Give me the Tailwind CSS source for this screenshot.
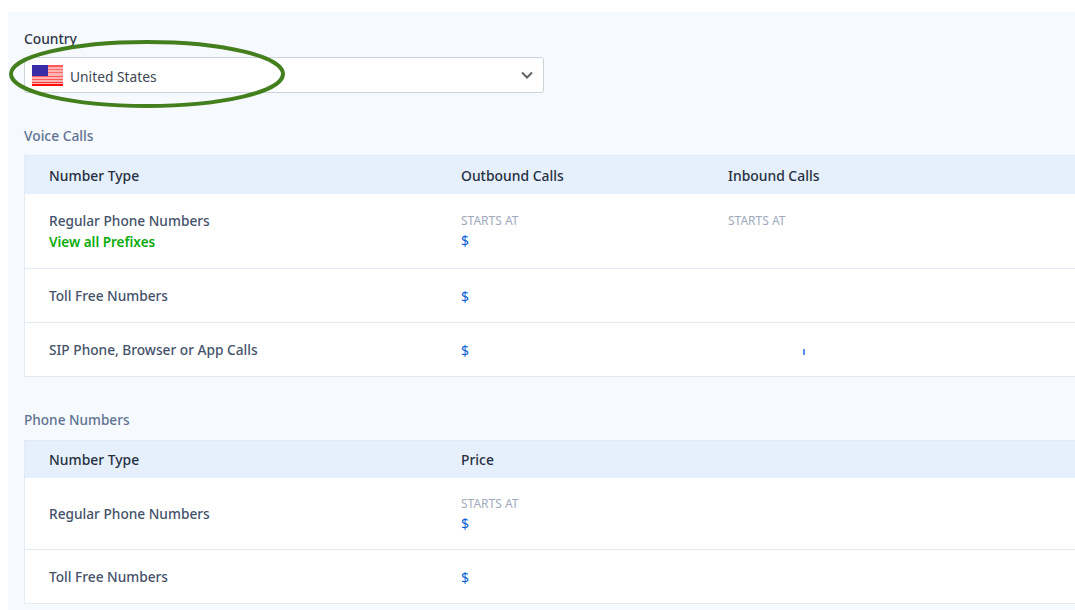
<!DOCTYPE html>
<html lang="en">
<head>
    <meta charset="UTF-8">
    <meta name="viewport" content="width=device-width, initial-scale=1.0">
    <title>Pricing</title>
    <script src="https://cdn.jsdelivr.net/npm/@tailwindcss/browser@4"></script>
</head>
<body class="bg-white font-['Noto_Sans',sans-serif] h-[610px] overflow-hidden">
    <div class="relative ml-2 mt-3 bg-[#f6f9fe] pl-4 h-[598px] overflow-hidden">
        <label class="block pt-[18px] text-[13.8px] leading-[18px] font-medium text-[#2d3748]">Country</label>
        <div class="mt-[9px] w-[520px] h-[36px] flex items-center justify-between bg-white border border-[#cbd2dc] rounded-[3px] pl-[7px] pr-[9px]">
            <div class="flex items-center">
                <svg width="31" height="21" viewBox="0 0 31 21">
                    <rect width="31" height="21" fill="#ffb3b3"/>
                    <rect y="0" width="31" height="2" fill="#ff5a5a"/>
                    <rect y="4" width="31" height="1" fill="#ff6a6a"/>
                    <rect y="7" width="31" height="1" fill="#ff6a6a"/>
                    <rect y="11" width="31" height="1" fill="#ff5a5a"/>
                    <rect y="14" width="31" height="1" fill="#ff5a5a"/>
                    <rect y="17" width="31" height="1" fill="#ff3a3a"/>
                    <rect y="19" width="31" height="2" fill="#ff1010"/>
                    <rect width="16" height="11" fill="#3a2ba8"/>
                </svg>
                <span class="ml-[7px] pt-[5px] text-[13.8px] text-[#3d4653]">United States</span>
            </div>
            <svg width="14" height="14" viewBox="0 0 14 14" fill="none" stroke="#5f6368" stroke-width="2">
                <path d="M2 4.5 7 9.5 12 4.5"/>
            </svg>
        </div>

        <h2 class="mt-[34px] text-[13.8px] leading-[18px] font-medium text-[#5e7391]">Voice Calls</h2>
        <div class="mt-[10px] w-[1200px] border border-[#e3eaf3] bg-white">
            <div class="flex h-[38px] items-center pt-[3px] bg-[#e6f0fc] text-[13.9px] font-medium text-[#252f3f]">
                <div class="w-[436px] pl-6">Number Type</div>
                <div class="w-[267px]">Outbound Calls</div>
                <div>Inbound Calls</div>
            </div>
            <div class="flex h-[75px] border-b border-[#e3eaf3] text-[13.7px] font-medium text-[#45526a]">
                <div class="w-[436px] pl-6 pt-[17px] leading-[20px]">
                    <div>Regular Phone Numbers</div>
                    <a href="#" class="block mt-px text-[13.5px] font-semibold text-[#0cab0c]">View all Prefixes</a>
                </div>
                <div class="w-[267px] pt-[20px]">
                    <div class="text-[12px] leading-[14px] font-normal text-[#a0aabb]">STARTS AT</div>
                    <div class="mt-[4px] text-[14px] leading-[18px] font-normal text-[#0a5fd8]">$</div>
                </div>
                <div class="pt-[20px]">
                    <div class="text-[12px] leading-[14px] font-normal text-[#a0aabb]">STARTS AT</div>
                </div>
            </div>
            <div class="flex h-[54px] items-center pt-[2px] border-b border-[#e3eaf3] text-[13.7px] font-medium text-[#45526a]">
                <div class="w-[436px] pl-6">Toll Free Numbers</div>
                <div class="w-[267px] text-[14px] font-normal text-[#0a5fd8]">$</div>
            </div>
            <div class="flex h-[53px] items-center pt-[2px] text-[13.7px] font-medium text-[#45526a]">
                <div class="w-[436px] pl-6">SIP Phone, Browser or App Calls</div>
                <div class="w-[267px] text-[14px] font-normal text-[#0a5fd8]">$</div>
                <div class="ml-[75px] mt-[3px] w-[2px] h-[6px] bg-[#0a5fd8]/70"></div>
            </div>
        </div>

        <h2 class="mt-[34px] text-[13.6px] leading-[18px] font-medium text-[#5e7391]">Phone Numbers</h2>
        <div class="mt-[11px] w-[1200px] border border-[#e3eaf3] bg-white">
            <div class="flex h-[37px] items-center pt-[2px] bg-[#e6f0fc] text-[13.9px] font-medium text-[#252f3f]">
                <div class="w-[436px] pl-6">Number Type</div>
                <div>Price</div>
            </div>
            <div class="flex h-[72px] items-center pt-[2px] border-b border-[#e3eaf3] text-[13.7px] font-medium text-[#45526a]">
                <div class="w-[436px] pl-6">Regular Phone Numbers</div>
                <div>
                    <div class="text-[12px] leading-[14px] font-normal text-[#a0aabb]">STARTS AT</div>
                    <div class="mt-[4px] text-[14px] leading-[18px] font-normal text-[#0a5fd8]">$</div>
                </div>
            </div>
            <div class="flex h-[53px] items-center pt-[2px] text-[13.7px] font-medium text-[#45526a]">
                <div class="w-[436px] pl-6">Toll Free Numbers</div>
                <div class="text-[14px] font-normal text-[#0a5fd8]">$</div>
            </div>
        </div>
    </div>
    <!-- hand drawn annotation over the select -->
    <svg class="absolute left-[8px] top-[39px]" width="280" height="70" viewBox="0 0 280 70" fill="none">
        <ellipse cx="139" cy="35" rx="136" ry="32" stroke="#437f1c" stroke-width="4"/>
    </svg>
</body>
</html>
